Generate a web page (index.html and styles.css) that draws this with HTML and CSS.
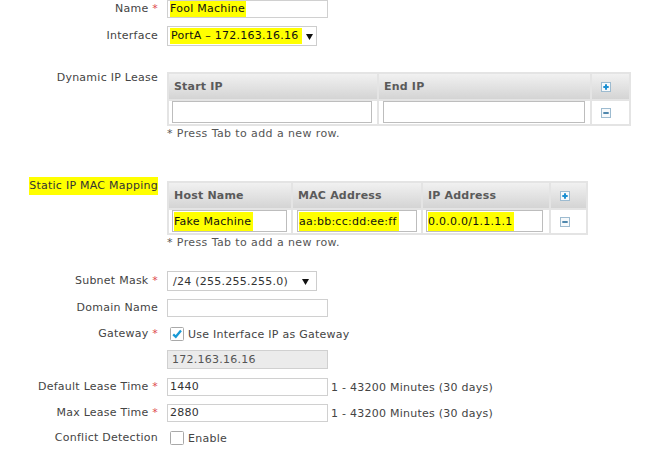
FILE: index.html
```html
<!DOCTYPE html>
<html>
<head>
<meta charset="utf-8">
<link rel="stylesheet" href="styles.css">
</head>
<body>
<div class="form">
  <div class="row r-name">
    <div class="label">Name <span class="req">*</span></div>
    <div class="field w160"><span class="hl">Fool Machine</span></div>
  </div>
  <div class="row r-iface">
    <div class="label">Interface</div>
    <div class="select"><span class="hl sel-hl">PortA – 172.163.16.16&nbsp;</span><svg class="arrow" width="7" height="7" viewBox="0 0 7 7"><polygon points="0,1 7,1 3.5,7" fill="#111"/></svg></div>
  </div>

  <div class="row top r-dyn">
    <div class="label lbl-top">Dynamic IP Lease</div>
    <div class="stack">
      <table class="grid">
        <tr>
          <th class="c-start">Start IP</th>
          <th class="c-end">End IP</th>
          <th class="c-btn"><svg class="ico" width="10" height="10" viewBox="0 0 10 10"><rect x="0.5" y="0.5" width="9" height="9" fill="#f6f9fb" stroke="#9dbbd0"/><path d="M5 2.3v5.4M2.3 5h5.4" stroke="#1b8fd2" stroke-width="2"/></svg></th>
        </tr>
        <tr>
          <td class="pad"><div class="cin"></div></td>
          <td class="pad pad-end"><div class="cin"></div></td>
          <td class="c-btn"><svg class="ico" width="10" height="10" viewBox="0 0 10 10"><rect x="0.5" y="0.5" width="9" height="9" fill="#f6f9fb" stroke="#9dbbd0"/><path d="M2.3 5h5.4" stroke="#4f87ad" stroke-width="2"/></svg></td>
        </tr>
      </table>
      <div class="hint">* Press Tab to add a new row.</div>
    </div>
  </div>

  <div class="row top r-static">
    <div class="label lbl-top lbl-static"><span class="hl lbl-hl">Static IP MAC Mapping</span></div>
    <div class="stack">
      <table class="grid">
        <tr>
          <th class="c-host">Host Name</th>
          <th class="c-mac">MAC Address</th>
          <th class="c-ip">IP Address</th>
          <th class="c-btn2"><svg class="ico" width="10" height="10" viewBox="0 0 10 10"><rect x="0.5" y="0.5" width="9" height="9" fill="#f6f9fb" stroke="#9dbbd0"/><path d="M5 2.3v5.4M2.3 5h5.4" stroke="#1b8fd2" stroke-width="2"/></svg></th>
        </tr>
        <tr>
          <td class="pad2"><div class="cin"><span class="hl cin-hl">Fake Machine</span></div></td>
          <td class="pad2 pad-mac"><div class="cin"><span class="hl cin-hl">aa:bb:cc:dd:ee:ff</span></div></td>
          <td class="pad2 pad-ip"><div class="cin"><span class="hl cin-hl">0.0.0.0/1.1.1.1</span></div></td>
          <td class="c-btn2"><svg class="ico" width="10" height="10" viewBox="0 0 10 10"><rect x="0.5" y="0.5" width="9" height="9" fill="#f6f9fb" stroke="#9dbbd0"/><path d="M2.3 5h5.4" stroke="#4f87ad" stroke-width="2"/></svg></td>
        </tr>
      </table>
      <div class="hint">* Press Tab to add a new row.</div>
    </div>
  </div>

  <div class="row r-subnet">
    <div class="label">Subnet Mask <span class="req">*</span></div>
    <div class="select"><span class="sel-text">/24 (255.255.255.0)</span><svg class="arrow arrow2" width="7" height="7" viewBox="0 0 7 7"><polygon points="0,1 7,1 3.5,7" fill="#111"/></svg></div>
  </div>
  <div class="row r-gap8">
    <div class="label">Domain Name</div>
    <div class="field w160"></div>
  </div>
  <div class="row r-gw">
    <div class="label">Gateway <span class="req">*</span></div>
    <div class="check-line">
      <svg class="cb" width="14" height="14" viewBox="0 0 14 14"><rect x="0.5" y="0.5" width="13" height="13" rx="1" fill="#fff" stroke="#a9a9a9"/><path d="M3.2 7.3L5.8 9.8L11 3.6" fill="none" stroke="#1a9ad6" stroke-width="2.3"/></svg>
      <span>Use Interface IP as Gateway</span>
    </div>
  </div>
  <div class="row r-gap8">
    <div class="label"></div>
    <div class="field w160 disabled tall">172.163.16.16</div>
  </div>
  <div class="row r-gap9">
    <div class="label">Default Lease Time <span class="req">*</span></div>
    <div class="with-hint"><div class="field w160">1440</div><span class="note">1 - 43200 Minutes (30 days)</span></div>
  </div>
  <div class="row r-gap8">
    <div class="label">Max Lease Time <span class="req">*</span></div>
    <div class="with-hint"><div class="field w160">2880</div><span class="note">1 - 43200 Minutes (30 days)</span></div>
  </div>
  <div class="row r-gap8">
    <div class="label">Conflict Detection</div>
    <div class="check-line">
      <svg class="cb" width="14" height="14" viewBox="0 0 14 14"><rect x="0.5" y="0.5" width="13" height="13" rx="1" fill="#fff" stroke="#a9a9a9"/></svg>
      <span>Enable</span>
    </div>
  </div>
</div>
</body>
</html>
```
FILE: styles.css
```css
body {
  margin: 0;
  background: #fff;
  font-family: "DejaVu Sans", Verdana, sans-serif;
  font-size: 11px;
  letter-spacing: 0.25px;
  color: #444;
}

.form {
  display: flex;
  flex-direction: column;
}

.row {
  display: grid;
  grid-template-columns: 158px max-content;
  column-gap: 9px;
  align-items: center;
}

.row.top {
  align-items: start;
}

.label {
  text-align: right;
  white-space: nowrap;
  line-height: 14px;
}

.lbl-top {
  margin-top: -1px;
}

.lbl-static {
  margin-top: -2px;
}

.req {
  color: #de4b4f;
}

.hl {
  background: #ffff00;
  color: #111;
}

.lbl-hl {
  padding: 2px 0 3px;
  color: #333;
}

.r-iface { margin-top: 8px; }
.r-dyn { margin-top: 26px; }
.r-static { margin-top: 41px; }
.r-subnet { margin-top: 22px; }
.r-gap8 { margin-top: 8px; }
.r-gap9 { margin-top: 9px; }
.r-gw { margin-top: 9px; }

.field {
  box-sizing: border-box;
  height: 18px;
  border: 1px solid #d0d0d0;
  background: #fff;
  padding: 0 2px;
  line-height: 16px;
  color: #333;
  white-space: nowrap;
  overflow: hidden;
}

.field .hl {
  display: inline-block;
  line-height: 16px;
  padding-right: 1px;
}

.w160 {
  width: 161px;
}

.field.disabled {
  background: #ebebeb;
  color: #555;
  padding-left: 4px;
}

.field.tall {
  height: 19px;
  line-height: 17px;
}

.select {
  box-sizing: border-box;
  width: 150px;
  height: 20px;
  border: 1px solid #cdcdcd;
  background: #fff;
  display: flex;
  align-items: center;
  padding-left: 2px;
  color: #333;
  white-space: nowrap;
}

.sel-hl {
  display: inline-block;
  line-height: 16px;
  padding-left: 1px;
}

.sel-text {
  padding-left: 3px;
}

.arrow {
  margin-left: 4px;
}

.arrow2 {
  margin-left: auto;
  margin-right: 7px;
}

.stack {
  display: flex;
  flex-direction: column;
}

.grid {
  border-collapse: collapse;
  border: 2px solid #e4e4e4;
}

.grid th,
.grid td {
  border: 2px solid #e4e4e4;
  padding: 0;
}

.grid th {
  height: 27px;
  background: linear-gradient(#f1f1f1, #d4d4d4);
  text-align: left;
  padding-left: 5px;
  font-weight: bold;
  letter-spacing: 0.2px;
  color: #5a5a5a;
  box-sizing: border-box;
}

.grid td {
  height: 25px;
  background: #fff;
  vertical-align: top;
  box-sizing: border-box;
}

.c-start { width: 210px; }
.c-end { width: 213px; }
.c-btn { width: 39px; }
.c-host { width: 124px; }
.c-mac { width: 130px; }
.c-ip { width: 128px; }
.c-btn2 { width: 37px; }

.grid th.c-btn,
.grid th.c-btn2,
.grid td.c-btn,
.grid td.c-btn2 {
  padding-left: 9px;
  vertical-align: middle;
}

.ico {
  display: block;
}

.pad {
  padding: 0 5px 1px 3px !important;
}

.pad-end {
  padding-left: 4px !important;
}

.pad2 {
  padding: 0 4px 1px 3px !important;
}

.pad-mac {
  padding-left: 4px !important;
}

.pad-ip {
  padding-right: 6px !important;
}

.cin {
  box-sizing: border-box;
  width: 100%;
  height: 22px;
  border: 1px solid #bdbdbd;
  background: #fff;
  padding: 1px 1px 0;
  white-space: nowrap;
  overflow: hidden;
}

.cin-hl {
  display: inline-block;
  line-height: 19px;
  padding-right: 2px;
}

.hint {
  line-height: 13px;
  color: #555;
  padding-top: 1px;
  letter-spacing: 0.4px;
}

.check-line {
  display: flex;
  align-items: center;
  height: 16px;
  gap: 4px;
  padding-left: 3px;
  color: #444;
}

.cb {
  display: block;
}

.with-hint {
  display: flex;
  align-items: center;
  gap: 3px;
}

.note {
  color: #444;
}
```
